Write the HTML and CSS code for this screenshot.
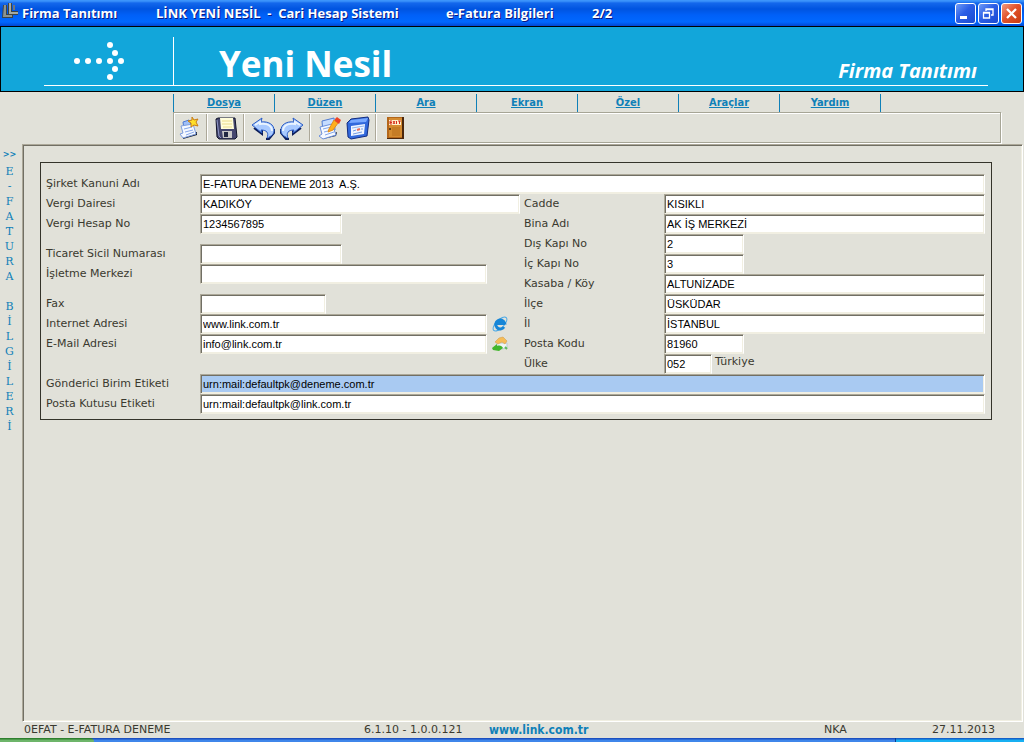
FILE: index.html
```html
<!DOCTYPE html>
<html lang="tr">
<head>
<meta charset="utf-8">
<title>Firma Tanıtımı</title>
<link rel="stylesheet" href="styles.css">
</head>
<body>
<div class="titlebar">
  <svg class="app-icon" width="18" height="18" viewBox="0 0 18 18" aria-hidden="true">
    <path d="M2 3h4v9h6v4H1z" fill="#3d4446"/><path d="M3 3h2v10h6v2H2z" fill="#8b9390"/>
    <path d="M7 1h4v8h6v4H7z" fill="#3d4446"/><path d="M8 1h2v9h7v2H8z" fill="#a5aaa2"/>
    <path d="M12 3h2v5h-2z" fill="#6d7680"/>
  </svg>
  <span class="title-name">Firma Tanıtımı</span>
  <span class="title-module">LİNK YENİ NESİL &nbsp;- &nbsp;Cari Hesap Sistemi</span>
  <span class="title-page">e-Fatura Bilgileri</span>
  <span class="title-count">2/2</span>
  <div class="window-buttons">
    <button class="win-btn" type="button" aria-label="Simge durumuna küçült"><svg width="17" height="17" viewBox="0 0 17 17"><path d="M3 11h7v3H3z" fill="#fff"/></svg></button>
    <button class="win-btn" type="button" aria-label="Önceki boyut"><svg width="17" height="17" viewBox="0 0 17 17"><path d="M6 6V4h7v6h-2M6 4.500h7M3.500 8h6v5h-6zM3 7.500h7" fill="none" stroke="#fff" stroke-width="1.300"/></svg></button>
    <button class="win-btn win-close" type="button" aria-label="Kapat"><svg width="17" height="17" viewBox="0 0 17 17"><path d="M4 4l9 9M13 4l-9 9" stroke="#fff" stroke-width="2.300"/></svg></button>
  </div>
</div>

<header class="banner">
  <div class="banner-logo">
    <svg width="52" height="40" viewBox="0 0 52 40" fill="#fff" aria-hidden="true">
      <circle cx="4" cy="20" r="3"/><circle cx="15" cy="20" r="3"/><circle cx="26" cy="20" r="3"/><circle cx="37" cy="20" r="3"/><circle cx="48" cy="20" r="3"/>
      <circle cx="42" cy="12" r="3"/><circle cx="42" cy="28" r="3"/><circle cx="37" cy="4" r="3"/><circle cx="37" cy="36" r="3"/>
    </svg>
  </div>
  <h1 class="brand">Yeni Nesil</h1>
  <h2 class="screen-name">Firma Tanıtımı</h2>
</header>

<nav class="menu">
  <a href="#">Dosya</a><a href="#">Düzen</a><a href="#">Ara</a><a href="#">Ekran</a><a href="#">Özel</a><a href="#">Araçlar</a><a href="#">Yardım</a>
</nav>

<div class="toolbar">
  <button class="tool" type="button" aria-label="Yeni"><svg width="24" height="24" viewBox="0 0 24 24">
    <path d="M6 23l14-4v-3l-14 4z" fill="#10192c"/><path d="M6 6l6-2 3 7-8 2z" fill="#9fc0f8" stroke="#4f7bd3"/>
    <path d="M4 10l12-2 3 10-13 4-3-4 3-1z" fill="#f5f9ff" stroke="#7f9fdf"/><path d="M7 13l8-2M8 16l8-2M9 19l8-3" stroke="#84a6ea"/>
    <path d="M15 1l2 3 4-1-2 3 2 4-4-1-3 2 0-4-3-2 4-1z" fill="#ffdf28" stroke="#c77c16"/></svg></button>
  <i class="sep"></i>
  <button class="tool" type="button" aria-label="Kaydet"><svg width="24" height="24" viewBox="0 0 24 24">
    <path d="M2 3l2-1h17l2 19-2 2H5l-2-2z" fill="#44466e" stroke="#11142b"/><path d="M3 4l2 16 2 2" fill="none" stroke="#8f97c8"/>
    <path d="M6 2h13l1 11H7z" fill="#fffdda"/><path d="M8 5h10M8 8h10M9 11h9" stroke="#eadb8c"/><path d="M8 15h10v7H9z" fill="#c9c8c7"/><path d="M10 16h4v5h-4z" fill="#222842"/></svg></button>
  <i class="sep"></i>
  <button class="tool" type="button" aria-label="Geri al"><svg width="24" height="24" viewBox="0 0 24 24">
    <path d="M3 12l8 6v-4M15 23h3l5-6v-4" fill="none" stroke="#0b1c58" stroke-width="2"/>
    <path d="M1 9l10-7-1 4c8-1 13 3 13 8 0 4-2 6-7 8 2-5 0-8-6-8l1 3z" fill="#a9caff" stroke="#2b5cc4"/><path d="M4 9l5-3v2c8-1 12 2 12 7" fill="none" stroke="#eaf4ff" stroke-width="2"/></svg></button>
  <button class="tool" type="button" aria-label="Yinele"><svg width="24" height="24" viewBox="0 0 24 24">
    <path d="M21 12l-8 6v-4M9 23H6l-5-6v-4" fill="none" stroke="#0b1c58" stroke-width="2"/>
    <path d="M23 9L13 2l1 4C6 5 1 9 1 14c0 4 2 6 7 8-2-5 0-8 6-8l-1 3z" fill="#a9caff" stroke="#2b5cc4"/><path d="M20 9l-5-3v2C7 7 3 10 3 15" fill="none" stroke="#eaf4ff" stroke-width="2"/></svg></button>
  <i class="sep"></i>
  <button class="tool" type="button" aria-label="Düzelt"><svg width="24" height="24" viewBox="0 0 24 24">
    <path d="M6 23l13-3 1-4z" fill="#10192c"/><path d="M5 5l12-3 1 12-12 3z" fill="#c5dcff" stroke="#4f7bd3"/><path d="M3 11l12-3 4 11-13 4-4-3 3-2z" fill="#f5f9ff" stroke="#6c90dc"/>
    <path d="M6 13l8-2M7 16l8-2M8 19l9-3" stroke="#84a6ea"/><path d="M12 13L17 4l4 3-5 7-5 2z" fill="#ffaf1c" stroke="#e08d20"/><path d="M18 3l2-2 4 3-2 4-4-3z" fill="#ed4324"/></svg></button>
  <button class="tool" type="button" aria-label="Takvim"><svg width="24" height="24" viewBox="0 0 24 24">
    <path d="M1 7l4-4 17-2 1 3-2 16-16 3-3-2z" fill="#3269dc" stroke="#122c80"/><path d="M3 7l2-3 17-2-2 4z" fill="#78a8ff"/><path d="M5 10l14-2-1 10-13 2z" fill="#f0f6ff"/><path d="M6 12l12-2" stroke="#8fb2ee"/><path d="M7 15l3-1M7 18l9-2M15 13h2" stroke="#739be3"/><path d="M11 14l3-1" stroke="#ef6c56" stroke-width="2"/></svg></button>
  <i class="sep"></i>
  <button class="tool" type="button" aria-label="Çıkış"><svg width="24" height="24" viewBox="0 0 24 24">
    <path d="M4 1h17v22H4z" fill="#4b270c"/><path d="M4 1h15v21H4z" fill="#b3661a"/><path d="M6 2h13v19H6z" fill="#d48b30"/><path d="M6 4h12v5H6z" fill="#fff0ca"/><path d="M9 5H7v3h2M7 6.500h2M10 5l2 3M12 5l-2 3M13.500 5v3M15 5h3M16.500 5v3" fill="none" stroke="#d62e1d"/><path d="M9 11h8v9H9z" fill="#c57c25"/><circle cx="7" cy="13" r="1" fill="#3c240d"/></svg></button>
</div>

<div class="workspace">
  <aside class="side">
    <a class="side-toggle" href="#">&gt;&gt;</a>
    <div class="side-text">E
-
F
A
T
U
R
A

B
İ
L
G
İ
L
E
R
İ</div>
  </aside>
  <main class="panel">
    <form class="form">
      <div class="row"><label for="sirket">Şirket Kanuni Adı</label><input id="sirket" value="E-FATURA DENEME 2013  A.Ş."></div>
      <div class="columns">
        <div class="col-left">
          <div class="row"><label for="daire">Vergi Dairesi</label><input id="daire" class="w-xl" value="KADIKÖY"></div>
          <div class="row"><label for="hesap">Vergi Hesap No</label><input id="hesap" class="w-m" value="1234567895"></div>
          <div class="row spaced"><label for="sicil">Ticaret Sicil Numarası</label><input id="sicil" class="w-m"></div>
          <div class="row"><label for="merkez">İşletme Merkezi</label><input id="merkez" class="w-l"></div>
          <div class="row spaced"><label for="fax">Fax</label><input id="fax" class="w-f"></div>
          <div class="row"><label for="web">Internet Adresi</label><input id="web" class="w-l" value="www.link.com.tr">
            <button class="mini" type="button" aria-label="Siteyi aç"><svg width="16" height="16" viewBox="0 0 16 16"><ellipse cx="8" cy="8" rx="9" ry="4" transform="rotate(-46 8 8)" fill="none" stroke="#4ba9e7"/><path d="M12 11a4.500 4.500 0 1 1 .5-4H5" fill="none" stroke="#1786d7" stroke-width="3"/><path d="M5 8h8" stroke="#1786d7" stroke-width="2"/></svg></button></div>
          <div class="row"><label for="mail">E-Mail Adresi</label><input id="mail" class="w-l" value="info@link.com.tr">
            <button class="mini" type="button" aria-label="E-posta gönder"><svg width="16" height="16" viewBox="0 0 16 16"><path d="M5 7h10v5l-5 1-5-2z" fill="#eff4f6" stroke="#b8ccd6"/><path d="M3 6l4-4 4-1 4 4-2 3-3-2-4 2z" fill="#f6bd58" stroke="#cf9743" stroke-width=".5"/><path d="M0 12l5-4v2c3-1 5 0 6 2l-4 3-6-1z" fill="#42b62c"/><path d="M13 11l2 2" stroke="#5dbb5b" stroke-width="2"/></svg></button></div>
        </div>
        <div class="col-right">
          <div class="row"><label for="cadde">Cadde</label><input id="cadde" value="KISIKLI"></div>
          <div class="row"><label for="bina">Bina Adı</label><input id="bina" value="AK İŞ MERKEZİ"></div>
          <div class="row"><label for="dis">Dış Kapı No</label><input id="dis" class="w-s" value="2"></div>
          <div class="row"><label for="ic">İç Kapı No</label><input id="ic" class="w-s" value="3"></div>
          <div class="row"><label for="kasaba">Kasaba / Köy</label><input id="kasaba" value="ALTUNİZADE"></div>
          <div class="row"><label for="ilce">İlçe</label><input id="ilce" value="ÜSKÜDAR"></div>
          <div class="row"><label for="il">İl</label><input id="il" value="İSTANBUL"></div>
          <div class="row"><label for="posta">Posta Kodu</label><input id="posta" class="w-s" value="81960"></div>
          <div class="row"><label for="ulke">Ülke</label><input id="ulke" class="w-xs" value="052"><span class="country">Türkiye</span></div>
        </div>
      </div>
      <div class="row"><label for="gb">Gönderici Birim Etiketi</label><input id="gb" class="active" value="urn:mail:defaultpk@deneme.com.tr"></div>
      <div class="row"><label for="pk">Posta Kutusu Etiketi</label><input id="pk" value="urn:mail:defaultpk@link.com.tr"></div>
    </form>
  </main>
</div>

<footer class="status">
  <span>0EFAT - E-FATURA DENEME</span>
  <span>6.1.10 - 1.0.0.121</span>
  <a href="#">www.link.com.tr</a>
  <span>NKA</span>
  <span class="date">27.11.2013</span>
</footer>
<div class="taskbar"><div class="start"></div><div class="tray"></div></div>
</body>
</html>
```
FILE: styles.css
```css
* { box-sizing: border-box; }
body {
  margin: 0;
  min-height: 100vh;
  display: flex;
  flex-direction: column;
  background: #e1e1d9;
  color: #3a392f;
  font: 11px/20px "DejaVu Sans", Verdana, sans-serif;
}
button { padding: 0; border: 0; background: none; }
svg { display: block; }

/* Title bar */
.titlebar {
  display: grid;
  grid-template-columns: 22px 134px 290px 146px 1fr auto;
  align-items: center;
  height: 26px;
  padding-right: 2px;
  background: linear-gradient(#3c94fb 0, #3c94fb 1px, #1468ec 3px, #0054e0 9px, #0060f8 15px, #0068ff 22px, #0046d2 26px);
  color: #fff;
  font: bold 13px/26px "Open Sans", "Trebuchet MS", sans-serif;
  text-shadow: 1px 1px #0a1883;
  white-space: nowrap;
}
.app-icon { align-self: start; margin: 2px 0 0 1px; }
.window-buttons { display: flex; gap: 2px; }
.win-btn {
  display: grid;
  place-items: center;
  width: 21px;
  height: 21px;
  border: 1px solid #fff;
  border-radius: 3px;
  background: linear-gradient(135deg, #6e9bf7, #2a5ee6 45%, #1a4ad0);
}
.win-close { background: linear-gradient(135deg, #f09a80, #e2532c 45%, #c83a10); }

/* Banner */
.banner {
  display: grid;
  grid-template-columns: 129px auto 1fr;
  height: 66px;
  padding: 10px 35px 6px 43px;
  border: 1px solid #000;
  background: linear-gradient(#fff, #fff) 43px 58px / calc(100% - 78px) 1px no-repeat #12a6da;
  color: #fff;
}
.banner-logo { padding: 4px 0 0 29px; }
.brand {
  height: 48px;
  margin: 0;
  padding-left: 45px;
  border-left: 1px solid #fff;
  font: bold 35px/54px "Open Sans", "Trebuchet MS", sans-serif;
}
.screen-name {
  margin: 0;
  padding: 20px 11px 0 0;
  text-align: right;
  font: italic bold 20px/28px "Open Sans", "Trebuchet MS", sans-serif;
}

/* Menu and toolbar */
.menu {
  display: flex;
  margin: 2px 0 0 173px;
  height: 18px;
}
.menu a {
  width: 101px;
  border-left: 1px solid #0f80b8;
  color: #0f80b8;
  font: bold 11px/18px "DejaVu Sans Condensed", Tahoma, sans-serif;
  text-align: center;
}
.menu a:last-child { width: 102px; border-right: 1px solid #0f80b8; }
.toolbar {
  display: flex;
  align-items: center;
  height: 31px;
  margin: 0 23px 1px 173px;
  padding-left: 3px;
  border: 1px solid #a6a596;
  box-shadow: inset 1px 1px #fff, 1px 1px #fff;
}
.tool { width: 24px; margin-right: 5px; }
.sep { width: 2px; height: 27px; margin-right: 6px; border-left: 1px solid #aca899; border-right: 1px solid #fff; }

/* Work area */
.workspace { flex: 1; display: flex; }
.side {
  width: 22px;
  padding-right: 3px;
  color: #0f80b8;
  text-align: center;
}
.side-toggle {
  display: block;
  color: inherit;
  font: bold 9px/20px "DejaVu Sans Condensed", Tahoma, sans-serif;
  text-decoration: none;
}
.side-text {
  font: 11px/15px "DejaVu Serif", "Courier New", serif;
  white-space: pre;
}
.panel {
  flex: 1;
  margin-right: 1px;
  padding: 17px 30px 0 17px;
  border: 1px solid;
  border-color: #aca899 #fff #fff #aca899;
  box-shadow: inset 1px 1px #716f64, inset -1px -1px #f1efe2;
}
.form {
  padding: 11px 6px 5px 5px;
  border: 1px solid #34332a;
}
.columns {
  display: grid;
  grid-template-columns: minmax(0, 478fr) minmax(0, 461fr);
}
.row {
  display: flex;
  align-items: center;
  height: 20px;
}
.row.spaced { margin-top: 10px; }
.row label { flex: 0 0 154px; line-height: 18px; }
.col-right label { flex-basis: 140px; }
.row input {
  flex: 1;
  min-width: 0;
  height: 20px;
  padding: 0 2px;
  border: 1px solid;
  border-color: #aca899 #fff #f1efe2 #aca899;
  border-radius: 0;
  background: #fff;
  box-shadow: inset 1px 1px #716f64, inset -1px -1px #f1efe2;
  color: #000;
  font: 11px/16px "Liberation Sans", Arial, sans-serif;
}
.row .w-xl { flex: 0 1 320px; }
.row .w-l { flex: 0 1 287px; }
.row .w-m { flex: 0 1 142px; }
.row .w-f { flex: 0 1 126px; }
.row .w-s { flex: 0 1 80px; }
.row .w-xs { flex: 0 1 48px; }
.row .active { background: #a9caf2; }
.mini { margin-left: 5px; }
.country { margin-left: 3px; line-height: 15px; align-self: flex-start; }

/* Status bar */
.status {
  display: grid;
  grid-template-columns: 340px 125px 1fr 108px 64px;
  height: 16px;
  padding: 0 28px 0 24px;
  line-height: 16px;
  white-space: nowrap;
}
.status a {
  color: #0f80b8;
  font: bold 12px/16px "DejaVu Sans Condensed", Tahoma, sans-serif;
  text-decoration: none;
}
.taskbar {
  display: flex;
  justify-content: space-between;
  height: 4px;
  background: linear-gradient(#1c50c0 0, #1c50c0 1px, #3f86ea 2px);
}
.start { width: 94px; border-radius: 0 4px 0 0; background: linear-gradient(#2e7f2e 0, #2e7f2e 1px, #6db56a 2px); }
.tray { width: 129px; border-left: 1px solid #0a3a90; background: linear-gradient(#1560c8 0, #1560c8 1px, #18b0f2 2px); }
```
